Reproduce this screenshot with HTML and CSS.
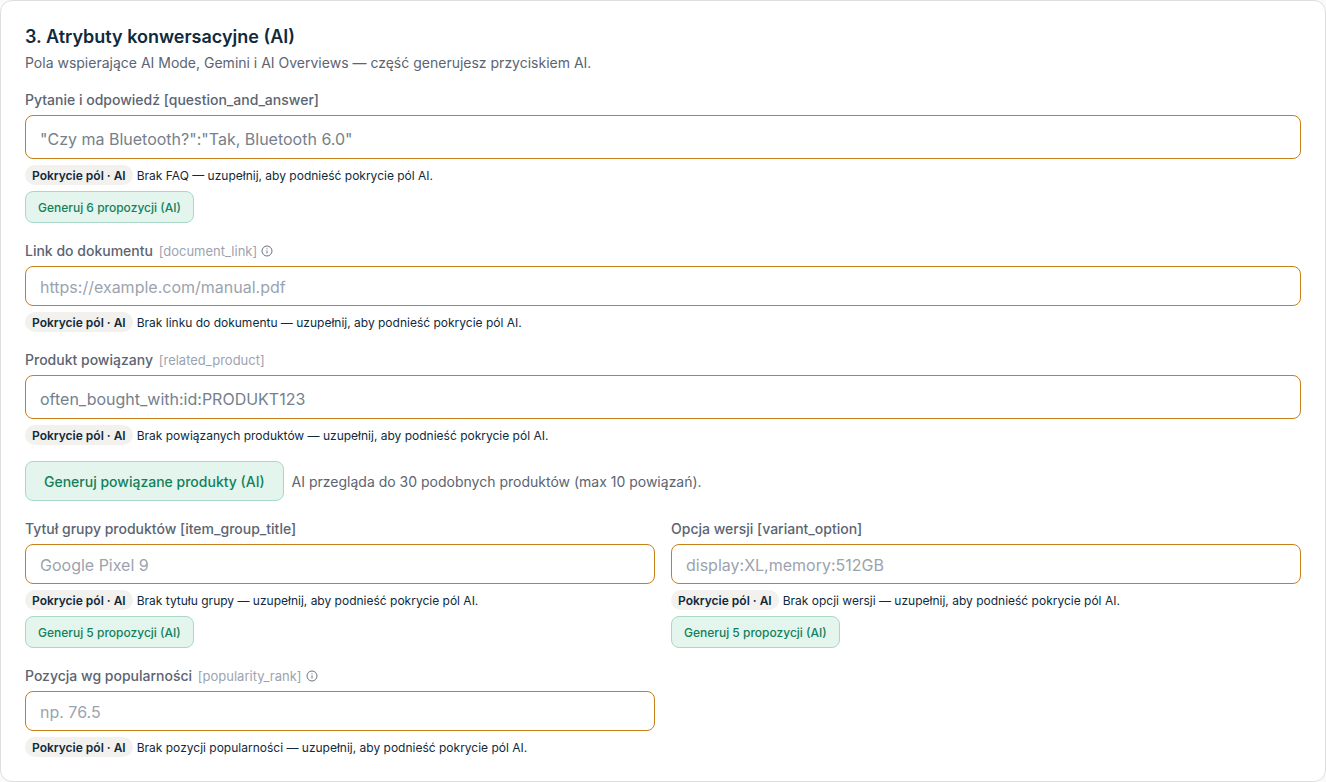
FILE: index.html
```html
<!DOCTYPE html>
<html lang="pl">
  <head>
    <meta charset="UTF-8" />
    <meta name="viewport" content="width=device-width, initial-scale=1" />
    <title>Atrybuty konwersacyjne (AI)</title>
    <link rel="stylesheet" href="styles.css">
  </head>
  <body>
    <section class="card">
      <header class="card-header">
        <h2>3. Atrybuty konwersacyjne (AI)</h2>
        <p>Pola wspierające AI Mode, Gemini i AI Overviews — część generujesz przyciskiem AI.</p>
      </header>

      <form class="fields">
        <!-- FAQ -->
        <div class="field wide">
          <div class="label-row">
            <label for="faq">Pytanie i odpowiedź [question_and_answer]</label>
          </div>
          <textarea id="faq" rows="1" placeholder="&quot;Czy ma Bluetooth?&quot;:&quot;Tak, Bluetooth 6.0&quot;"></textarea>
          <p class="hint"><span class="badge">Pokrycie pól · AI</span>Brak FAQ — uzupełnij, aby podnieść pokrycie pól AI.</p>
          <button type="button" class="btn">Generuj 6 propozycji (AI)</button>
        </div>

        <!-- Dokument -->
        <div class="field wide">
          <div class="label-row">
            <label for="doc">Link do dokumentu <span class="attr">[document_link]</span></label>
            <svg class="info" viewBox="0 0 12 12" aria-hidden="true">
              <circle cx="6" cy="6" r="5" />
              <path d="M6 5.5v3M6 3.3v1" />
            </svg>
          </div>
          <input id="doc" type="url" placeholder="https://example.com/manual.pdf" />
          <p class="hint"><span class="badge">Pokrycie pól · AI</span>Brak linku do dokumentu — uzupełnij, aby podnieść pokrycie pól AI.</p>
        </div>

        <!-- Produkty powiązane -->
        <div class="field wide">
          <div class="label-row">
            <label for="related">Produkt powiązany <span class="attr">[related_product]</span></label>
          </div>
          <textarea id="related" rows="1" placeholder="often_bought_with:id:PRODUKT123"></textarea>
          <p class="hint"><span class="badge">Pokrycie pól · AI</span>Brak powiązanych produktów — uzupełnij, aby podnieść pokrycie pól AI.</p>
          <div class="actions">
            <button type="button" class="btn btn-large">Generuj powiązane produkty (AI)</button>
            <span class="note">AI przegląda do 30 podobnych produktów (max 10 powiązań).</span>
          </div>
        </div>

        <!-- Grupa i wersja -->
        <div class="field">
          <div class="label-row">
            <label for="group">Tytuł grupy produktów [item_group_title]</label>
          </div>
          <input id="group" type="text" placeholder="Google Pixel 9" />
          <p class="hint"><span class="badge">Pokrycie pól · AI</span>Brak tytułu grupy — uzupełnij, aby podnieść pokrycie pól AI.</p>
          <button type="button" class="btn">Generuj 5 propozycji (AI)</button>
        </div>
        <div class="field">
          <div class="label-row">
            <label for="variant">Opcja wersji [variant_option]</label>
          </div>
          <input id="variant" type="text" placeholder="display:XL,memory:512GB" />
          <p class="hint"><span class="badge">Pokrycie pól · AI</span>Brak opcji wersji — uzupełnij, aby podnieść pokrycie pól AI.</p>
          <button type="button" class="btn">Generuj 5 propozycji (AI)</button>
        </div>

        <!-- Popularność -->
        <div class="field">
          <div class="label-row">
            <label for="rank">Pozycja wg popularności <span class="attr">[popularity_rank]</span></label>
            <svg class="info" viewBox="0 0 12 12" aria-hidden="true">
              <circle cx="6" cy="6" r="5" />
              <path d="M6 5.5v3M6 3.3v1" />
            </svg>
          </div>
          <input id="rank" type="text" inputmode="decimal" placeholder="np. 76.5" />
          <p class="hint"><span class="badge">Pokrycie pól · AI</span>Brak pozycji popularności — uzupełnij, aby podnieść pokrycie pól AI.</p>
        </div>
      </form>
    </section>
  </body>
</html>
```
FILE: styles.css
```css
* {
  box-sizing: border-box;
}
body {
  margin: 0;
  background: #fafafa;
  color: #0f2a3d;
  font-family: Inter, "Liberation Sans", sans-serif;
  font-size: 14px;
  line-height: 20px;
}
h2,
p {
  margin: 0;
}
.card {
  padding: 24px;
  background: #fff;
  border: 1px solid #dedede;
  border-radius: 12px;
}
.card-header {
  display: flex;
  flex-direction: column;
  gap: 4px;
  margin-bottom: 17px;
  color: #5b6472;
}
.card-header h2 {
  color: #0f2a3d;
  font-size: 18px;
  font-weight: 600;
  line-height: 24px;
}
/* Siatka pól */
.fields {
  display: grid;
  grid-template-columns: 1fr 1fr;
  gap: 18px 16px;
}
.field {
  display: flex;
  flex-direction: column;
  align-items: flex-start;
  gap: 6px;
}
.wide {
  grid-column: 1 / -1;
}
.label-row {
  display: flex;
  align-items: center;
  gap: 4px;
  margin-bottom: -1px;
  color: #5b6472;
  font-weight: 500;
}
.attr {
  margin-left: 2px;
  color: #9ca3af;
  font-size: 13px;
  font-weight: 400;
}
.info {
  width: 12px;
  height: 12px;
  fill: none;
  stroke: #6b7280;
  stroke-width: 1;
}
input,
textarea {
  display: block;
  width: 100%;
  height: 40px;
  padding: 2px 14px 0;
  border: 1px solid #c77f1a;
  border-radius: 8px;
  background: #fff;
  color: #0f2a3d;
  font: inherit;
  font-size: 16px;
}
textarea {
  height: 44px;
  padding: 11px 14px;
  line-height: 24px;
  resize: none;
  overflow: hidden;
}
input::placeholder {
  color: #9ca3af;
}
textarea::placeholder {
  color: #757f8d;
}
/* Podpowiedź pod polem */
.hint {
  display: flex;
  align-items: flex-end;
  gap: 4px;
  font-size: 12px;
  line-height: 18px;
}
.badge {
  padding: 2px 7px 0;
  border-radius: 10px;
  background: #f2f1ee;
  font-weight: 600;
}
.btn {
  height: 32px;
  padding: 2px 12px 0;
  border: 1px solid #a9d8c8;
  border-radius: 8px;
  background: #e4f5ee;
  color: #13805a;
  font: inherit;
  font-size: 12px;
  font-weight: 500;
  cursor: pointer;
}
.btn-large {
  height: 40px;
  padding: 2px 18px 0;
  font-size: 14px;
}
.actions {
  display: flex;
  align-items: center;
  gap: 8px;
  margin-top: 10px;
  color: #5b6472;
}
.note {
  padding-top: 2px;
}
```
